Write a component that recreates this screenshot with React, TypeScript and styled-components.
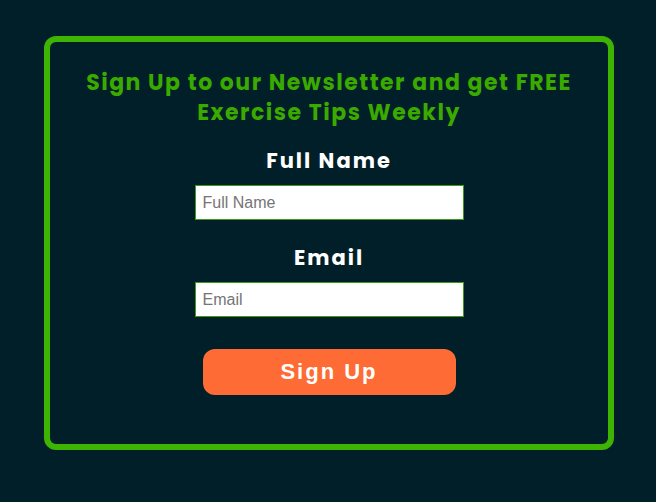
import React from "react";
import styled, { createGlobalStyle } from "styled-components";

const Global = createGlobalStyle`
  html, body { margin: 0; padding: 0; background: #001f28; }
  body { width: 656px; height: 502px; overflow: hidden; }
`;

const Page = styled.div`
  box-sizing: border-box;
  width: 656px;
  height: 502px;
  padding: 36px 42px 52px 44px;
  background: #001f28;
`;

const Card = styled.form`
  box-sizing: border-box;
  height: 100%;
  border: 6px solid #3db303;
  border-radius: 12px;
  display: flex;
  flex-direction: column;
  align-items: center;
  padding: 26px 20px 0;
`;

const Title = styled.h2`
  margin: 0;
  font-family: "Poppins", "Inter", "Noto Sans", sans-serif;
  font-weight: 700;
  font-size: 22px;
  line-height: 30px;
  letter-spacing: 1.5px;
  color: #3aaa00;
  text-align: center;
`;

const Label = styled.label<{ $top: number }>`
  margin-top: ${(p) => p.$top}px;
  font-family: "Poppins", "Inter", "Noto Sans", sans-serif;
  font-weight: 700;
  font-size: 21px;
  line-height: 28px;
  letter-spacing: 2px;
  color: #ffffff;
`;

const Input = styled.input`
  box-sizing: border-box;
  margin-top: 10px;
  width: 269px;
  height: 35px;
  border: 1px solid #3a9a1a;
  background: #ffffff;
  padding: 0 7px;
  font-family: "Liberation Sans", Arial, sans-serif;
  font-size: 16px;
  color: #333;
  outline: none;
  &::placeholder { color: #757575; }
`;

const Button = styled.button`
  margin-top: 32px;
  width: 253px;
  height: 46px;
  border: none;
  border-radius: 12px;
  background: #ff6b35;
  color: #ffffff;
  font-family: "Liberation Sans", Arial, sans-serif;
  font-weight: 700;
  font-size: 22px;
  letter-spacing: 2px;
  cursor: pointer;
`;

export default function App() {
  return (
    <>
      <Global />
      <Page>
        <Card onSubmit={(e) => e.preventDefault()}>
          <Title>
            Sign Up to our Newsletter and get FREE
            <br />
            Exercise Tips Weekly
          </Title>
          <Label $top={19} htmlFor="name">Full Name</Label>
          <Input id="name" placeholder="Full Name" />
          <Label $top={24} htmlFor="email">Email</Label>
          <Input id="email" placeholder="Email" />
          <Button type="submit">Sign Up</Button>
        </Card>
      </Page>
    </>
  );
}
